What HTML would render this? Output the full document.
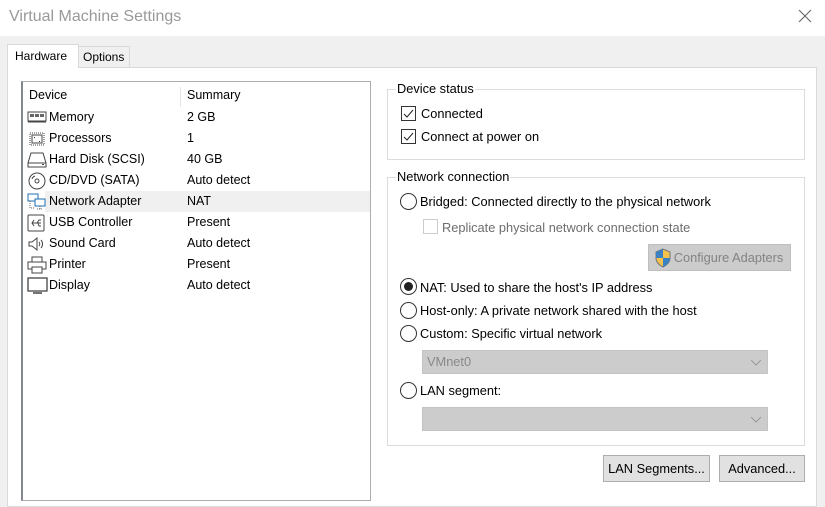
<!DOCTYPE html>
<html><head><meta charset="utf-8"><style>
*{box-sizing:border-box;margin:0;padding:0}
body{width:825px;height:492px;overflow:hidden;background:#f0f0f0;font-family:"Liberation Sans",sans-serif;font-size:12px;color:#000;position:relative}
.abs{position:absolute}
.title{left:0;top:0;width:825px;height:36px;background:#fff}
.title span{position:absolute;left:9px;top:8px;font-size:16px;color:#999}
.panel{left:7px;top:67px;width:810px;height:440px;background:#fff;border:1px solid #d9d9d9}
.tab{top:44px;height:24px;border:1px solid #d9d9d9;border-bottom:none;padding:4px 7px}
.list{left:21px;top:81px;width:350px;height:420px;border:1px solid #adadad;border-left:2px solid #828790;background:#fff;font-size:12.5px}
.row{position:absolute;left:0;height:21px;width:347px;line-height:21px}
.row .n{position:absolute;left:26px}
.row .s{position:absolute;left:164px}
.row svg{position:absolute;left:4px;top:2px}
.rp{font-size:12.8px}
.grp{border:1px solid #dcdcdc}
.lg{position:absolute;top:-9px;left:8px;background:#fff;padding:0 1px}
.cb{width:15px;height:15px;border:1px solid #333;background:#fff}
.rb{width:17px;height:17px;border:1px solid #333;border-radius:50%;background:#fff}
.btn{background:#e1e1e1;border:1px solid #adadad;text-align:center;line-height:25px}
.dd{background:#ccc;border:1px solid #c4c4c4;color:#888;padding-left:4px;line-height:22px}
</style></head><body>
<div class="abs title"><span>Virtual Machine Settings</span>
<svg class="abs" style="left:798px;top:9px" width="14" height="14"><path d="M1 1L13 13M13 1L1 13" stroke="#666" stroke-width="1.1"/></svg></div>
<div class="abs panel"></div>
<div class="abs tab" style="left:78px;top:46px;width:52px;height:21px;background:#f0f0f0;padding:3px 4px">Options</div>
<div class="abs tab" style="left:7px;width:72px;height:24px;background:#fff;padding:4px 7px">Hardware</div>
<div class="abs list">
 <div class="row" style="top:3px;height:22px"><span class="abs" style="left:6px">Device</span><span class="s">Summary</span><div class="abs" style="left:157px;top:2px;width:1px;height:20px;background:#e5e5e5"></div></div>
 <div class="row" style="top:25px"><svg width="20" height="16"><rect x="1" y="3" width="18" height="9" fill="none" stroke="#444"/><rect x="3" y="5" width="4" height="3" fill="#666"/><rect x="8" y="5" width="4" height="3" fill="#666"/><rect x="13" y="5" width="4" height="3" fill="#666"/><path d="M1 13h18" stroke="#444"/></svg><span class="n">Memory</span><span class="s">2 GB</span></div>
 <div class="row" style="top:46px"><svg width="20" height="18"><rect x="3" y="3" width="14" height="12" fill="none" stroke="#444" stroke-dasharray="1 1"/><rect x="5" y="5" width="10" height="8" fill="none" stroke="#444"/><rect x="7" y="7" width="1" height="1" fill="#333"/><rect x="12" y="11" width="1" height="1" fill="#333"/></svg><span class="n">Processors</span><span class="s">1</span></div>
 <div class="row" style="top:67px"><svg width="20" height="18"><path d="M4 2h12l3 10v4H1v-4z" fill="none" stroke="#444"/><path d="M1 12h18" stroke="#444"/><rect x="15" y="13" width="2" height="1" fill="#444"/></svg><span class="n">Hard Disk (SCSI)</span><span class="s">40 GB</span></div>
 <div class="row" style="top:88px"><svg width="20" height="18"><circle cx="10" cy="9" r="8" fill="none" stroke="#444"/><circle cx="10" cy="9" r="2" fill="none" stroke="#444"/><path d="M5 7a5 5 0 0 1 3-3" stroke="#444" fill="none"/></svg><span class="n">CD/DVD (SATA)</span><span class="s">Auto detect</span></div>
 <div class="row" style="top:109px;background:#f0f0f0;left:22px;width:325px"></div>
 <div class="row" style="top:109px"><svg width="20" height="18"><rect x="1" y="1" width="10" height="7" fill="#fff" stroke="#1e6fb0"/><rect x="8" y="6" width="10" height="7" fill="#fff" stroke="#1e6fb0"/><path d="M13 13v3M10 16h6M3 8v7h5" stroke="#666" stroke-dasharray="1 1" fill="none"/></svg><span class="n">Network Adapter</span><span class="s">NAT</span></div>
 <div class="row" style="top:130px"><svg width="20" height="18"><rect x="1" y="1" width="16" height="16" rx="1" fill="none" stroke="#444"/><path d="M5 9h9M7 6l-2 3 2 3M10 9l2-3h2M11 9l1 3h2" stroke="#444" fill="none"/></svg><span class="n">USB Controller</span><span class="s">Present</span></div>
 <div class="row" style="top:151px"><svg width="20" height="18"><path d="M2 7h3l5-4v12l-5-4H2z" fill="none" stroke="#444"/><path d="M12 7a3 3 0 0 1 0 4M14 5a6 6 0 0 1 0 8" stroke="#444" fill="none"/></svg><span class="n">Sound Card</span><span class="s">Auto detect</span></div>
 <div class="row" style="top:172px"><svg width="20" height="18"><rect x="5" y="1" width="10" height="5" fill="none" stroke="#444"/><rect x="1" y="6" width="18" height="7" fill="none" stroke="#444"/><rect x="5" y="11" width="10" height="6" fill="#fff" stroke="#444"/></svg><span class="n">Printer</span><span class="s">Present</span></div>
 <div class="row" style="top:193px"><svg width="22" height="18"><rect x="1" y="1" width="19" height="13" fill="none" stroke="#444" stroke-width="1.3"/><path d="M6 16h9" stroke="#444" stroke-width="1.5"/></svg><span class="n">Display</span><span class="s">Auto detect</span></div>
</div>

<div class="rp">
<div class="abs grp" style="left:387px;top:89px;width:418px;height:71px"><span class="lg">Device status</span>
 <div class="abs cb" style="left:13px;top:16px"><svg width="13" height="13"><path d="M2 7l3 3 6-7" stroke="#222" fill="none"/></svg></div><span class="abs" style="left:33px;top:16px">Connected</span>
 <div class="abs cb" style="left:13px;top:39px"><svg width="13" height="13"><path d="M2 7l3 3 6-7" stroke="#222" fill="none"/></svg></div><span class="abs" style="left:33px;top:39px">Connect at power on</span>
</div>

<div class="abs grp" style="left:387px;top:177px;width:418px;height:269px"><span class="lg">Network connection</span>
 <div class="abs rb" style="left:12px;top:15px"></div><span class="abs" style="left:32px;top:16px">Bridged: Connected directly to the physical network</span>
 <div class="abs cb" style="left:35px;top:41px;border-color:#ccc"></div><span class="abs" style="left:54px;top:42px;color:#6d6d6d">Replicate physical network connection state</span>
 <div class="abs btn" style="left:260px;top:66px;width:143px;height:27px;background:#ccc;border-color:#bfbfbf;color:#838383;padding-left:18px">
  <svg class="abs" style="left:5px;top:3px" width="18" height="20"><path d="M9 1L2 4v6c0 4 3 7 7 9 4-2 7-5 7-9V4z" fill="#f2c14e" stroke="#777"/><path d="M9 1L2 4v6h7zM9 10h7c0 4-3 7-7 9z" fill="#3b82c4"/></svg>Configure Adapters</div>
 <div class="abs rb" style="left:12px;top:100px"><div style="margin:3px;width:9px;height:9px;border-radius:50%;background:#222"></div></div><span class="abs" style="left:32px;top:102px">NAT: Used to share the host's IP address</span>
 <div class="abs rb" style="left:12px;top:124px"></div><span class="abs" style="left:32px;top:125px">Host-only: A private network shared with the host</span>
 <div class="abs rb" style="left:12px;top:147px"></div><span class="abs" style="left:32px;top:148px">Custom: Specific virtual network</span>
 <div class="abs dd" style="left:34px;top:172px;width:346px;height:24px">VMnet0<svg class="abs" style="right:6px;top:8px" width="10" height="7"><path d="M0 1l5 5 5-5" stroke="#999" fill="none"/></svg></div>
 <div class="abs rb" style="left:12px;top:204px"></div><span class="abs" style="left:32px;top:205px">LAN segment:</span>
 <div class="abs dd" style="left:34px;top:229px;width:346px;height:24px"><svg class="abs" style="right:6px;top:8px" width="10" height="7"><path d="M0 1l5 5 5-5" stroke="#999" fill="none"/></svg></div>
</div>

<div class="abs btn" style="left:603px;top:455px;width:107px;height:27px">LAN Segments...</div>
<div class="abs btn" style="left:719px;top:455px;width:86px;height:27px">Advanced...</div>
</div>
</body></html>
